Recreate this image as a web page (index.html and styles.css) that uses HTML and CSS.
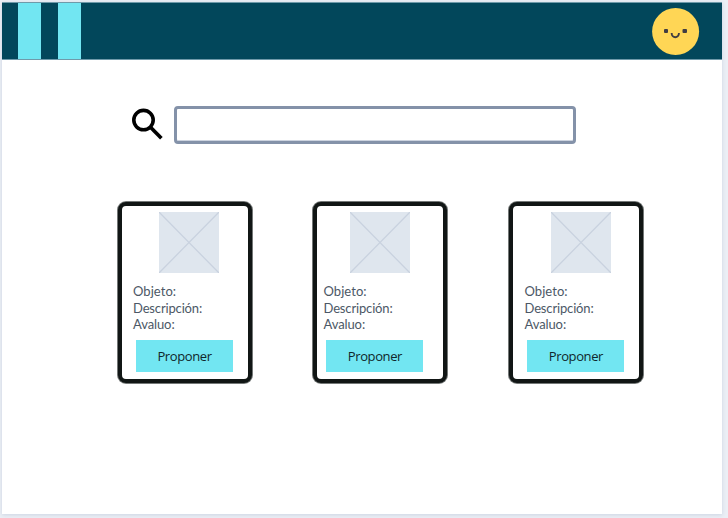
FILE: index.html
```html
<!DOCTYPE html>
<html lang="es">
<head>
<meta charset="utf-8">
<title>Objetos</title>
<link rel="stylesheet" href="styles.css">
</head>
<body>
<div class="page">
  <header class="topbar">
    <div class="stripes"><span class="stripe"></span><span class="stripe"></span></div>
    <svg class="avatar" viewBox="0 0 48 48">
      <circle cx="23.6" cy="23.5" r="23.5" fill="#ffd655"/>
      <rect x="12" y="21" width="4" height="4" rx="1" fill="#413d42"/>
      <rect x="30.5" y="21" width="4.5" height="4" rx="1" fill="#413d42"/>
      <path d="M19.7 25v.6a3.6 3.6 0 0 0 7.2 0v-.6" fill="none" stroke="#413d42" stroke-width="1.9"/>
    </svg>
  </header>
  <main>
    <div class="search">
      <svg class="lens" viewBox="0 0 34 34">
        <circle cx="13.5" cy="14.1" r="9.7" fill="none" stroke="#000" stroke-width="3.6"/>
        <path d="M20.5 21.2L31.4 32.2" stroke="#000" stroke-width="3.7"/>
      </svg>
      <div class="field"></div>
    </div>
    <div class="cards">
      <article class="card first">
        <svg class="thumb" viewBox="0 0 60 61"><path d="M0 0L60 61M60 0L0 61"/></svg>
        <div class="info"><p class="objeto">Objeto:</p><p class="descripcion">Descripción:</p><p class="avaluo">Avaluo:</p></div>
        <div class="button">Proponer</div>
      </article>
      <article class="card second">
        <svg class="thumb" viewBox="0 0 60 61"><path d="M0 0L60 61M60 0L0 61"/></svg>
        <div class="info"><p class="objeto">Objeto:</p><p class="descripcion">Descripción:</p><p class="avaluo">Avaluo:</p></div>
        <div class="button">Proponer</div>
      </article>
      <article class="card third">
        <svg class="thumb" viewBox="0 0 60 61"><path d="M0 0L60 61M60 0L0 61"/></svg>
        <div class="info"><p class="objeto">Objeto:</p><p class="descripcion">Descripción:</p><p class="avaluo">Avaluo:</p></div>
        <div class="button">Proponer</div>
      </article>
    </div>
  </main>
</div>
</body>
</html>
```
FILE: styles.css
```css
* { box-sizing: border-box; }
body {
  margin: 0;
  padding: 2px;
  height: 518px;
  overflow: hidden;
  background: #ebeff5;
}
.page {
  width: 720px;
  height: 512px;
  background: #fff;
  box-shadow: 0 1px 4px #cbd3e2;
}
.topbar {
  display: flex;
  justify-content: space-between;
  align-items: center;
  height: 58px;
  padding: 0 22px 0 16px;
  background: #02475b;
  border-top: 1px solid #6f9aaa;
  border-bottom: 1px solid #6f9aaa;
}
.stripes { display: flex; gap: 17px; height: 56px; }
.stripe { width: 23px; background: #72e6f2; }
.avatar { width: 48px; height: 48px; margin-top: 2px; }
.search {
  display: flex;
  gap: 10px;
  padding: 46px 0 0 128px;
}
.lens { width: 34px; height: 34px; }
.field {
  width: 402px;
  height: 38px;
  border: 3px solid #8492a9;
  border-radius: 4px;
  box-shadow: inset 0 -1px 0 #ccd3df;
}
.cards {
  display: grid;
  grid-template-columns: 195px 196px 134px;
  padding: 58px 0 0 116px;
}
.card {
  display: flex;
  flex-direction: column;
  align-items: flex-start;
  width: 134px;
  height: 181px;
  border: 4px solid #111615;
  border-radius: 8px;
  box-shadow: 0 0 0 1px #747877;
  background: #fff;
  padding: 6px 0 0 11px;
}
.second { padding-left: 6.5px; }
.third { padding-left: 11.5px; }
.thumb {
  width: 60px;
  height: 61px;
  margin-left: 26px;
  background: #dfe6ee;
  flex: none;
}
.second .thumb { margin-left: 26.5px; }
.third .thumb { margin-left: 26.5px; }
.thumb path { stroke: #c9d2df; stroke-width: 1.3; }
.info {
  margin-top: 10px;
  font: 13px/16.5px Lato, sans-serif;
  color: #4c5866;
}
.info p { margin: 0; width: max-content; }
.objeto { letter-spacing: .05px; }
.descripcion { letter-spacing: -.15px; }
.avaluo { letter-spacing: -.1px; }
.button {
  width: 97px;
  height: 32px;
  margin: 7.5px 0 0 3px;
  background: #72e6f2;
  color: #10272b;
  font: 13px/33px "Open Sans", sans-serif;
  letter-spacing: -.4px;
  text-align: center;
}
.second .button { margin-left: 2.9px; }
.third .button { margin-left: 2.9px; }
```
